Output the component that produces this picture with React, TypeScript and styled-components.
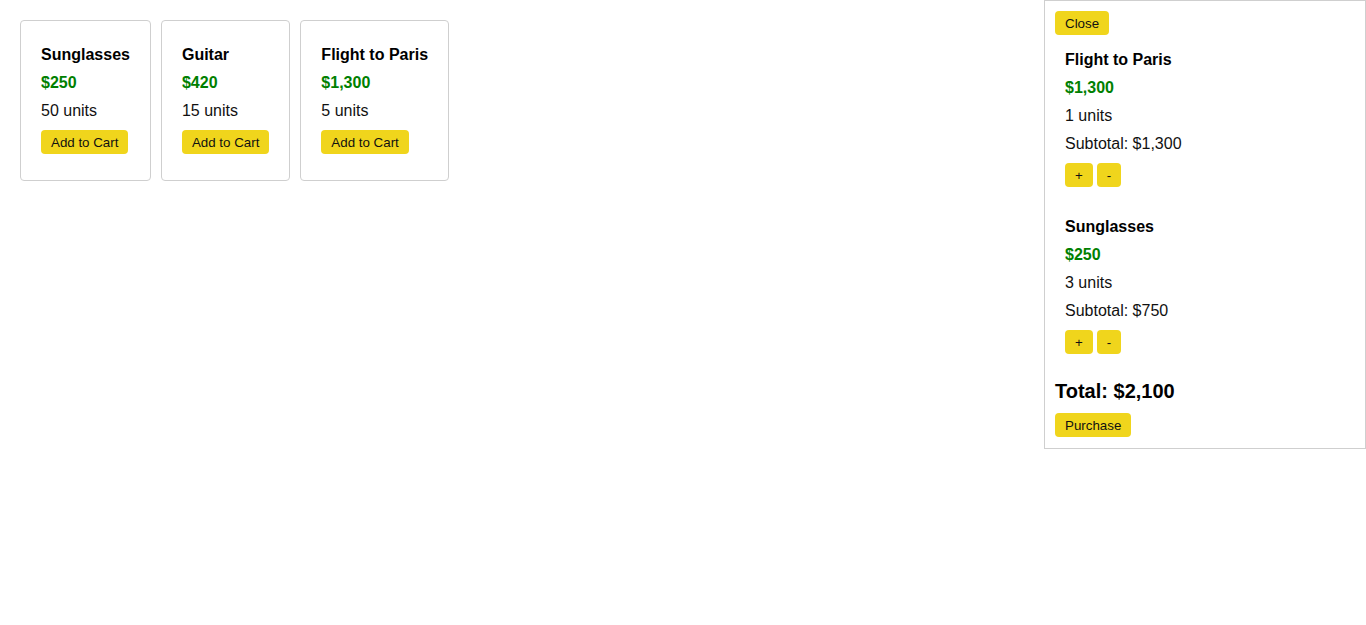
import React from "react";
import styled, { createGlobalStyle } from "styled-components";

const GlobalStyle = createGlobalStyle`
  html, body { margin: 0; padding: 0; background: #fff; }
  body { font-family: "Liberation Sans", Arial, sans-serif; color: #111; }
`;

const Shelf = styled.div`
  display: flex;
  align-items: flex-start;
  gap: 10px;
  padding: 20px;
`;

const Card = styled.div`
  border: 1px solid #cfcfcf;
  border-radius: 4px;
  padding: 24px 20px 26px;
  display: flex;
  flex-direction: column;
  align-items: flex-start;
  background: #fff;
`;

const Title = styled.div`
  font-size: 16px;
  line-height: 20px;
  font-weight: bold;
  color: #000;
  margin-bottom: 8px;
  white-space: nowrap;
`;

const Price = styled.div`
  font-size: 16px;
  line-height: 20px;
  font-weight: bold;
  color: #008000;
  margin-bottom: 8px;
`;

const Line = styled.div<{ $last?: boolean }>`
  font-size: 16px;
  line-height: 20px;
  color: #111;
  margin-bottom: ${(p) => (p.$last ? "9px" : "8px")};
  white-space: nowrap;
`;

const Button = styled.button`
  font-family: "Liberation Sans", Arial, sans-serif;
  font-size: 13.333px;
  height: 24px;
  padding: 0 10px;
  border: none;
  border-radius: 4px;
  background: #f0d51c;
  color: #111;
  cursor: pointer;
  white-space: nowrap;
`;

const CartPanel = styled.aside`
  position: fixed;
  top: 0;
  right: 0;
  width: 300px;
  padding: 10px 10px 11px;
  border: 1px solid #cfcfcf;
  background: #fff;
  display: flex;
  flex-direction: column;
  align-items: flex-start;
`;

const CartItem = styled.div<{ $first?: boolean }>`
  padding: 10px;
  margin-top: ${(p) => (p.$first ? "5px" : "10px")};
  display: flex;
  flex-direction: column;
  align-items: flex-start;
`;

const QtyRow = styled.div`
  display: flex;
  gap: 4px;
`;

const Total = styled.div`
  font-size: 20px;
  line-height: 24px;
  font-weight: bold;
  color: #000;
  margin: 15px 0 10px;
`;

const products = [
  { name: "Sunglasses", price: 250, stock: 50 },
  { name: "Guitar", price: 420, stock: 15 },
  { name: "Flight to Paris", price: 1300, stock: 5 },
];

const cart = [
  { name: "Flight to Paris", price: 1300, qty: 1 },
  { name: "Sunglasses", price: 250, qty: 3 },
];

const TOTAL = 2100;

const fmt = (n: number) => "$" + n.toLocaleString("en-US");

export default function App() {
  return (
    <>
      <GlobalStyle />
      <Shelf>
        {products.map((p) => (
          <Card key={p.name}>
            <Title>{p.name}</Title>
            <Price>{fmt(p.price)}</Price>
            <Line $last>{p.stock} units</Line>
            <Button>Add to Cart</Button>
          </Card>
        ))}
      </Shelf>
      <CartPanel>
        <Button>Close</Button>
        {cart.map((c, i) => (
          <CartItem key={c.name} $first={i === 0}>
            <Title>{c.name}</Title>
            <Price>{fmt(c.price)}</Price>
            <Line>{c.qty} units</Line>
            <Line $last>Subtotal: {fmt(c.price * c.qty)}</Line>
            <QtyRow>
              <Button>+</Button>
              <Button>-</Button>
            </QtyRow>
          </CartItem>
        ))}
        <Total>Total: {fmt(TOTAL)}</Total>
        <Button>Purchase</Button>
      </CartPanel>
    </>
  );
}
